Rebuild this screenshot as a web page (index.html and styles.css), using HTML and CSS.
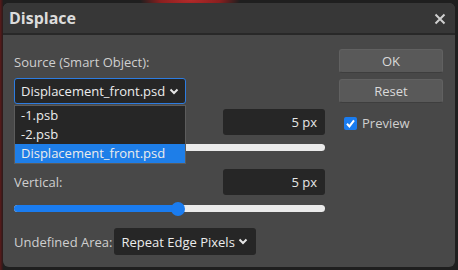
FILE: index.html
```html
<!DOCTYPE html>
<html>
<head>
<meta charset="utf-8">
<link rel="stylesheet" href="styles.css">
</head>
<body>
<div class="dialog">
  <div class="titlebar">
    <span class="title">Displace</span>
    <svg class="close" width="12" height="12" viewBox="0 0 12 12"><path d="M1.5 1.5 L10.5 10.5 M10.5 1.5 L1.5 10.5" stroke="#cfcfcf" stroke-width="2" fill="none"/></svg>
  </div>
  <div class="content">
    <div class="left">
      <div class="label first">Source (Smart Object):</div>
      <div class="select-wrap">
        <div class="select source">
          <span>Displacement_front.psd</span>
          <svg class="chev" width="10" height="7" viewBox="0 0 10 7"><path d="M1.5 1.5 L5 5 L8.5 1.5" stroke="#e6e6e6" stroke-width="2" fill="none"/></svg>
        </div>
        <div class="dropdown">
          <div class="opt">-1.psb</div>
          <div class="opt">-2.psb</div>
          <div class="opt sel">Displacement_front.psd</div>
        </div>
      </div>
      <div class="row r-h">
        <span class="label">Horizontal:</span>
        <div class="num">5 px</div>
      </div>
      <div class="slider s-h"><div class="fill" style="width:164px"></div><div class="thumb" style="left:157px"></div></div>
      <div class="row r-v">
        <span class="label">Vertical:</span>
        <div class="num">5 px</div>
      </div>
      <div class="slider s-v"><div class="fill" style="width:164px"></div><div class="thumb" style="left:157px"></div></div>
      <div class="row r-u">
        <span class="label">Undefined Area:</span>
        <div class="select undef">
          <span>Repeat Edge Pixels</span>
          <svg class="chev" width="10" height="7" viewBox="0 0 10 7"><path d="M1.5 1.5 L5 5 L8.5 1.5" stroke="#e6e6e6" stroke-width="2" fill="none"/></svg>
        </div>
      </div>
    </div>
    <div class="right">
      <div class="btn ok">OK</div>
      <div class="btn reset">Reset</div>
      <div class="check-row">
        <span class="checkbox"><svg width="13" height="13" viewBox="0 0 13 13"><path d="M3 6.8 L5.4 9.4 L10 3.4" stroke="#fff" stroke-width="2" fill="none"/></svg></span>
        <span class="label">Preview</span>
      </div>
    </div>
  </div>
</div>
</body>
</html>
```
FILE: styles.css
```css
* { box-sizing: border-box; }
html, body { margin: 0; padding: 0; }
body {
  width: 458px; height: 270px; overflow: hidden;
  background: radial-gradient(ellipse 50px 14px at 190px 0px, #b52a2a 0%, #8a1f1f 60%, transparent 100%),
              linear-gradient(to right, #5a1a1a 0px, #2a1a1a 3px, #1f1f1f 3px);
  font-family: "Open Sans", "Noto Sans", sans-serif;
  font-size: 13px;
  color: #d2d2d2;
  padding: 3px 3px 0 3px;
}
.dialog {
  width: 452px; height: 264px;
  background: #484848;
  border-radius: 6px;
  overflow: visible;
}
.titlebar {
  height: 32px;
  background: #373737;
  border-bottom: 2px solid #282828;
  border-radius: 6px 6px 0 0;
  display: flex; align-items: center; justify-content: space-between;
  padding: 0 9px 0 6px;
}
.title { font-weight: 700; font-size: 16px; color: #dcdcdc; }
.close { margin-top: 2px; }
.content {
  display: flex;
  gap: 14px;
  padding-left: 11px;
}
.left { width: 311px; display: flex; flex-direction: column; }
.label { color: #cfcfcf; line-height: 18px; white-space: nowrap; }
.label.first { margin-top: 18px; }
.select-wrap { position: relative; margin-top: 7px; }
.select {
  background: #262626;
  border-radius: 3px;
  display: flex; align-items: center; justify-content: space-between;
  color: #ececec;
  white-space: nowrap;
}
.select.source {
  width: 172px; height: 26px;
  border: 1px solid #2d7ce0;
  padding: 0 6px 0 6px;
}
.dropdown {
  position: absolute; left: 0; top: 27px;
  width: 172px;
  background: #262626;
  border: 1px solid #5c5c5c;
  color: #ececec;
  z-index: 2;
}
.opt { height: 19px; line-height: 19px; padding-left: 6px; white-space: nowrap; }
.opt.sel { background: #1e7ee8; }
.row { display: flex; align-items: center; justify-content: space-between; }
.r-h { margin-top: 5px; height: 26px; }
.r-v { margin-top: 18px; height: 26px; }
.r-u { margin-top: 16px; height: 27px; justify-content: flex-start; gap: 2px; }
.num {
  width: 102px; height: 26px;
  background: #262626; border-radius: 3px;
  text-align: right; line-height: 26px; padding-right: 8px;
  color: #e6e6e6;
}
.slider {
  position: relative;
  height: 7px; border-radius: 4px;
  background: #ebebeb;
}
.s-h { margin-top: 9px; }
.s-v { margin-top: 10px; }
.fill { height: 7px; background: #1a7cf0; border-radius: 4px 0 0 4px; }
.thumb {
  position: absolute; top: -3.5px;
  width: 14px; height: 14px; border-radius: 50%;
  background: #1a7cf0;
}
.select.undef {
  width: 142px; height: 27px;
  padding: 0 8px 0 7px;
}
.right { width: 104px; display: flex; flex-direction: column; }
.btn {
  height: 24px;
  background: #595959;
  border: 1px solid #616161;
  border-bottom-color: #3e3e3e;
  border-radius: 3px;
  text-align: center; line-height: 22px;
  color: #dadada;
}
.ok { margin-top: 14px; }
.reset { margin-top: 6px; }
.check-row { margin-top: 11px; display: flex; align-items: center; gap: 5px; padding-left: 5px; }
.checkbox {
  width: 13px; height: 13px; border-radius: 2px;
  background: #1a7cf0;
  display: block;
}
.checkbox svg { display: block; }
```
